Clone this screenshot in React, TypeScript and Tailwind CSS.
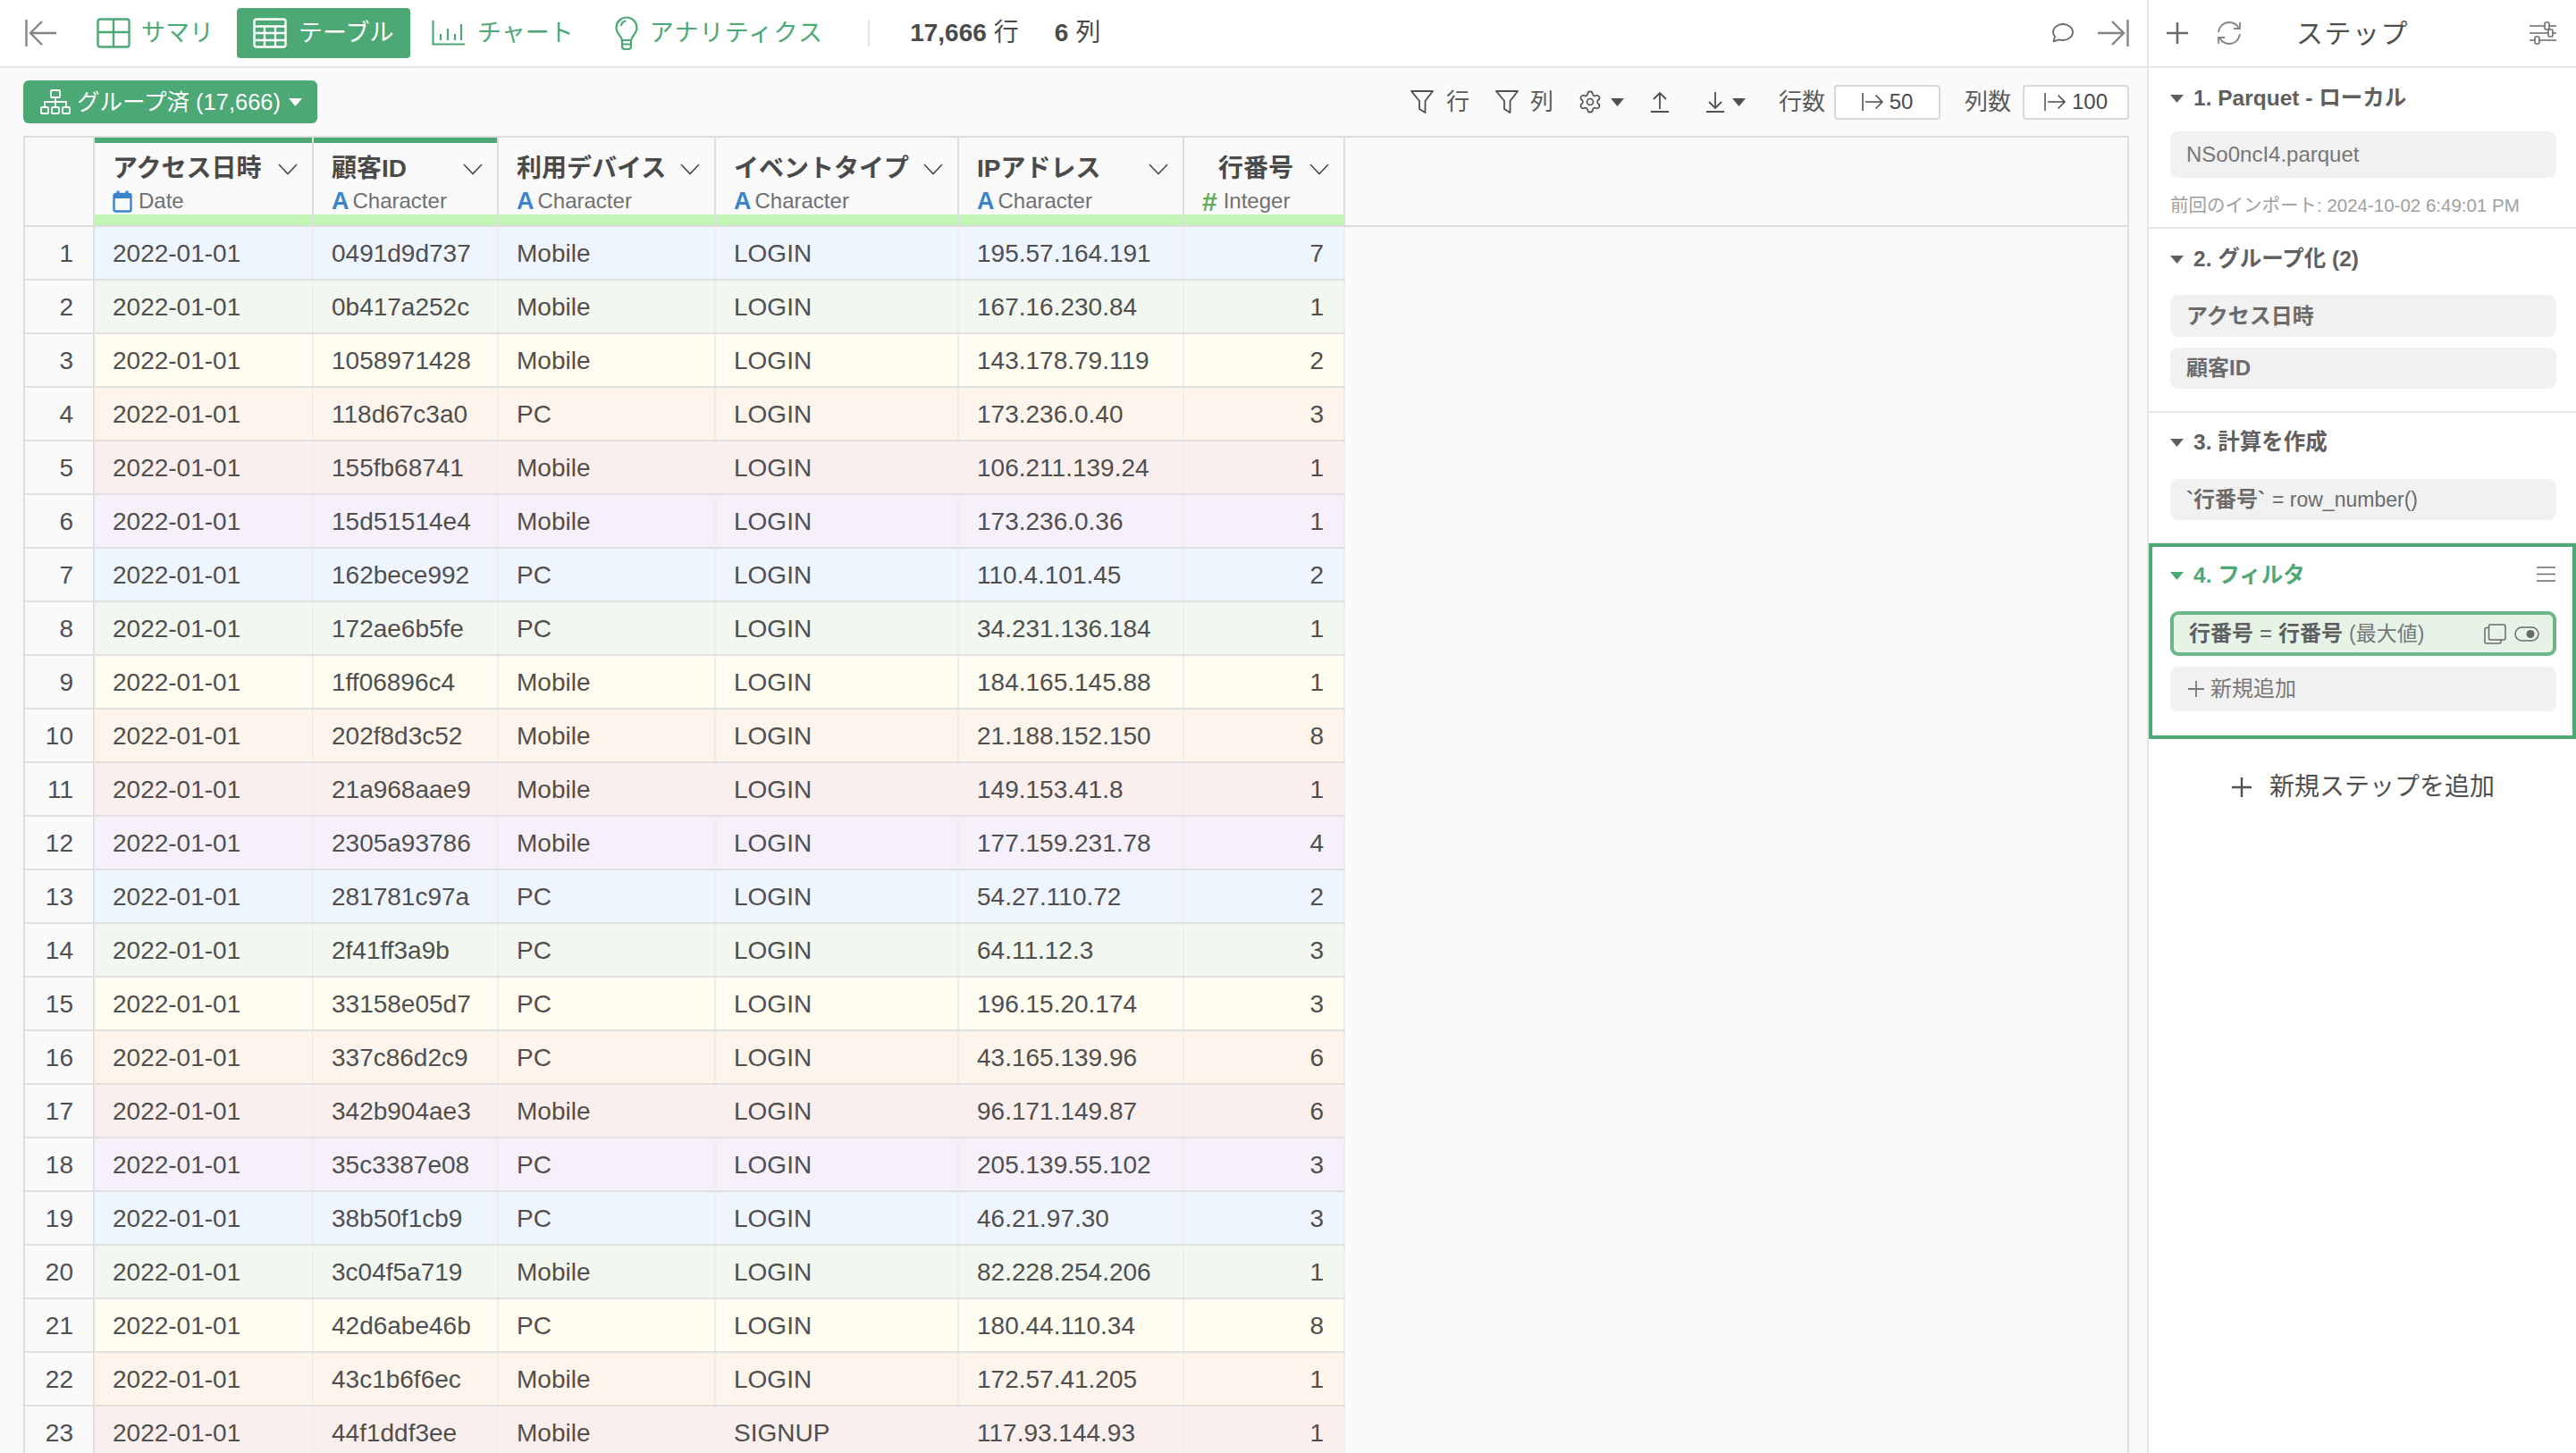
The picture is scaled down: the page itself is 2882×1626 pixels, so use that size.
import React from "react";
import { Settings } from "lucide-react";

const font = { fontFamily: '"Liberation Sans", "Noto Sans CJK JP", sans-serif' };

const rows: [string, string, string, string, number][] = [
  ["0491d9d737", "Mobile", "LOGIN", "195.57.164.191", 7],
  ["0b417a252c", "Mobile", "LOGIN", "167.16.230.84", 1],
  ["1058971428", "Mobile", "LOGIN", "143.178.79.119", 2],
  ["118d67c3a0", "PC", "LOGIN", "173.236.0.40", 3],
  ["155fb68741", "Mobile", "LOGIN", "106.211.139.24", 1],
  ["15d51514e4", "Mobile", "LOGIN", "173.236.0.36", 1],
  ["162bece992", "PC", "LOGIN", "110.4.101.45", 2],
  ["172ae6b5fe", "PC", "LOGIN", "34.231.136.184", 1],
  ["1ff06896c4", "Mobile", "LOGIN", "184.165.145.88", 1],
  ["202f8d3c52", "Mobile", "LOGIN", "21.188.152.150", 8],
  ["21a968aae9", "Mobile", "LOGIN", "149.153.41.8", 1],
  ["2305a93786", "Mobile", "LOGIN", "177.159.231.78", 4],
  ["281781c97a", "PC", "LOGIN", "54.27.110.72", 2],
  ["2f41ff3a9b", "PC", "LOGIN", "64.11.12.3", 3],
  ["33158e05d7", "PC", "LOGIN", "196.15.20.174", 3],
  ["337c86d2c9", "PC", "LOGIN", "43.165.139.96", 6],
  ["342b904ae3", "Mobile", "LOGIN", "96.171.149.87", 6],
  ["35c3387e08", "PC", "LOGIN", "205.139.55.102", 3],
  ["38b50f1cb9", "PC", "LOGIN", "46.21.97.30", 3],
  ["3c04f5a719", "Mobile", "LOGIN", "82.228.254.206", 1],
  ["42d6abe46b", "PC", "LOGIN", "180.44.110.34", 8],
  ["43c1b6f6ec", "Mobile", "LOGIN", "172.57.41.205", 1],
  ["44f1ddf3ee", "Mobile", "SIGNUP", "117.93.144.93", 1],
];

const rowBg = ["bg-[#eff5fe]", "bg-[#f2f7ef]", "bg-[#fffcf0]", "bg-[#fdf4ec]", "bg-[#fbefee]", "bg-[#f5f0fa]"];

const Caret = ({ className = "" }: { className?: string }) => (
  <svg width="15" height="9" viewBox="0 0 15 9" className={className} fill="currentColor">
    <path d="M0 0h15L7.5 9z" />
  </svg>
);

const Chevron = () => (
  <svg width="22" height="13" viewBox="0 0 22 13" fill="none" stroke="#4a4a4a" strokeWidth="1.6">
    <path d="M1 1l10 10.5L21 1" />
  </svg>
);

const FilterIcon = () => (
  <svg width="26" height="26" viewBox="0 0 26 26" fill="none" stroke="#4f4f4f" strokeWidth="1.8" strokeLinejoin="round">
    <path d="M1 1h24L16.5 12v13L10 21V12z" />
  </svg>
);

const LimitIcon = () => (
  <svg width="25" height="20" viewBox="0 0 25 20" fill="none" stroke="#4a4a4a" strokeWidth="1.5" className="shrink-0 mr-[6px]">
    <path d="M1 0v20" />
    <path d="M4 10h19M15.500 2.500L23 10l-7.500 7.500" />
  </svg>
);

function TypeLabel({ kind }: { kind: "date" | "char" | "int" }) {
  if (kind === "date")
    return (
      <div className="flex items-center h-[30px]">
        <svg width="22" height="25" viewBox="0 0 22 25" fill="none" className="mr-[7px]">
          <rect x="1.5" y="4" width="19" height="19.5" rx="2" stroke="#3a84cf" strokeWidth="2.4" />
          <rect x="1.5" y="4" width="19" height="5" fill="#3a84cf" />
          <rect x="4.5" y="0.5" width="3" height="5" fill="#3a84cf" />
          <rect x="14.5" y="0.5" width="3" height="5" fill="#3a84cf" />
        </svg>
        <span className="text-[24px] text-[#707070]">Date</span>
      </div>
    );
  if (kind === "int")
    return (
      <div className="flex items-center h-[30px]">
        <span className="text-[30px] font-bold text-[#62ab5b] mr-[7px]">#</span>
        <span className="text-[24px] text-[#707070]">Integer</span>
      </div>
    );
  return (
    <div className="flex items-center h-[30px]">
      <span className="text-[27px] font-bold text-[#3a84cf] mr-[4px]">A</span>
      <span className="text-[24px] text-[#707070]">Character</span>
    </div>
  );
}

function HeadCell({
  w,
  title,
  kind,
  mark,
  right,
}: {
  w: string;
  title: string;
  kind: "date" | "char" | "int";
  mark?: boolean;
  right?: boolean;
}) {
  return (
    <div className={`${w} h-[98px] flex flex-col border-r-2 border-[#dddddd] shrink-0`}>
      <div className={`h-[6px] ${mark ? "bg-[#4ca874]" : ""}`} />
      <div className={`flex items-center h-[56px] pt-[2px] pl-[20px] pr-[16px] ${right ? "justify-end gap-[18px]" : "justify-between"}`}>
        <span className="text-[28px] font-bold text-[#4a4a4a] whitespace-nowrap">{title}</span>
        <Chevron />
      </div>
      <div className="pl-[20px] h-[24px] flex items-center -mt-[3px]">
        <TypeLabel kind={kind} />
      </div>
      <div className="mt-auto h-[12px] bg-[#c3f5b6]" />
    </div>
  );
}

function Cell({ w, children, right }: { w: string; children: React.ReactNode; right?: boolean }) {
  return (
    <div
      className={`${w} h-full flex items-center shrink-0 pt-[1px] border-r-2 border-[#eeeeee] text-[28px] text-[#4f4f4f] ${
        right ? "justify-end pr-[22px]" : "pl-[20px]"
      }`}
    >
      {children}
    </div>
  );
}

function Tab({
  icon,
  label,
  active,
  className = "",
}: {
  icon: React.ReactNode;
  label: string;
  active?: boolean;
  className?: string;
}) {
  return (
    <div
      className={`flex items-center h-[56px] rounded-[4px] text-[27px] whitespace-nowrap ${
        active ? "bg-[#4ca874] text-white" : "text-[#4ca874]"
      } ${className}`}
    >
      {icon}
      <span>{label}</span>
    </div>
  );
}

function SectionTitle({ children, green }: { children: React.ReactNode; green?: boolean }) {
  return (
    <div className={`flex items-center h-[34px] text-[24.5px] font-bold ${green ? "text-[#4ca874]" : "text-[#5f5f5f]"}`}>
      <Caret className="mr-[11px] shrink-0" />
      <span className="whitespace-nowrap">{children}</span>
    </div>
  );
}

function StepBox({ children, className = "" }: { children: React.ReactNode; className?: string }) {
  return (
    <div className={`w-[432px] flex items-center pl-[18px] bg-[#f1f1f1] rounded-[9px] text-[24px] text-[#6b6b6b] whitespace-nowrap ${className}`}>
      {children}
    </div>
  );
}

export default function App() {
  return (
    <div className="w-[2882px] h-[1626px] overflow-hidden flex bg-white" style={font}>
      {/* Main pane */}
      <div className="w-[2402px] shrink-0 flex flex-col bg-[#fafafa]">
        {/* Top bar */}
        <div className="h-[76px] shrink-0 bg-white border-b-2 border-[#e5e5e5] flex items-center pl-[28px] pr-[20px]">
          <svg width="36" height="32" viewBox="0 0 36 32" fill="none" stroke="#858585" strokeWidth="2.4" className="shrink-0">
            <path d="M1.5 1v30" />
            <path d="M35 16H6M19 3L6 16l13 13" />
          </svg>
          <Tab
            className="ml-[44px]"
            label="サマリ"
            icon={
              <svg width="38" height="34" viewBox="0 0 38 34" fill="none" stroke="#4ca874" strokeWidth="2.4" className="mr-[12px]">
                <rect x="1.5" y="1.5" width="35" height="31" rx="2.5" />
                <path d="M19 1.500v31M1.500 16h35" />
              </svg>
            }
          />
          <Tab
            active
            className="ml-[26px] w-[194px] pl-[18px]"
            label="テーブル"
            icon={
              <svg width="38" height="34" viewBox="0 0 38 34" fill="none" stroke="#ffffff" strokeWidth="2.4" className="mr-[13px]">
                <rect x="1.5" y="1.5" width="35" height="31" rx="2.5" />
                <path d="M1.500 9.500h35M1.500 17h35M1.500 25h35M13 9.500v23M25 9.500v23" />
              </svg>
            }
          />
          <Tab
            className="ml-[24px]"
            label="チャート"
            icon={
              <svg width="38" height="28" viewBox="0 0 38 28" fill="none" stroke="#4ca874" strokeWidth="2.2" className="mr-[13px]">
                <path d="M1.500 0v26.500H37" />
                <path d="M10 15v7M18 9v13M26 15v7M33 4v18" />
              </svg>
            }
          />
          <Tab
            className="ml-[46px] tracking-[1.2px]"
            label="アナリティクス"
            icon={
              <svg width="26" height="38" viewBox="0 0 26 38" fill="none" stroke="#4ca874" strokeWidth="2.2" className="mr-[13px]">
                <path d="M8 27c0-4-6.500-7-6.500-14a11.500 11.500 0 0 1 23 0c0 7-6.500 10-6.500 14z" />
                <path d="M7 11c0-3 2.500-5.500 5.500-5.500" />
                <path d="M8 27v7c0 1.500 1 3 3 3h4c2 0 3-1.500 3-3v-7M8 31.500h10" />
              </svg>
            }
          />
          <div className="ml-[50px] w-[2px] h-[30px] bg-[#e5e5e5]" />
          <div className="ml-[45px] text-[28px] text-[#4a4a4a] whitespace-nowrap">
            <span className="font-bold">17,666</span>
            <span className="ml-[8px]">行</span>
            <span className="font-bold ml-[40px]">6</span>
            <span className="ml-[8px]">列</span>
          </div>
          <div className="ml-auto flex items-center">
            <svg width="24" height="22" viewBox="0 0 24 22" fill="none" stroke="#6a6a6a" strokeWidth="1.8" strokeLinejoin="round" className="shrink-0">
              <path d="M1.500 20.500l1.500-5.500C1.500 13.500 1 11.800 1 10 1 5 6 1 12 1s11 4 11 9-5 9-11 9c-1.500 0-3-.2-4.500-.7z" />
            </svg>
            <svg width="36" height="32" viewBox="0 0 36 32" fill="none" stroke="#858585" strokeWidth="2.4" className="ml-[26px] shrink-0">
              <path d="M34.500 1v30" />
              <path d="M1 16h29M17 3l13 13-13 13" />
            </svg>
          </div>
        </div>

        {/* Toolbar */}
        <div className="h-[76px] shrink-0 flex items-center pl-[26px] pr-[20px]">
          <div className="h-[48px] w-[329px] rounded-[6px] bg-[#4ca874] text-white flex items-center pl-[19px] text-[25.5px] whitespace-nowrap">
            <svg width="34" height="28" viewBox="0 0 34 28" fill="none" stroke="#ffffff" strokeWidth="1.8" className="mr-[7px] shrink-0">
              <rect x="12" y="1" width="10" height="8" rx="1" />
              <path d="M17 9v5M5 20v-6h24v6M17 14v6" />
              <rect x="1" y="20" width="8" height="7" rx="1" />
              <rect x="13" y="20" width="8" height="7" rx="1" />
              <rect x="25" y="20" width="8" height="7" rx="1" />
            </svg>
            <span>グループ済 (17,666)</span>
            <Caret className="ml-[9px]" />
          </div>
          <div className="ml-auto flex items-center text-[26px] text-[#5a5a5a] whitespace-nowrap">
            <FilterIcon />
            <span className="ml-[14px]">行</span>
            <span className="ml-[29px]">
              <FilterIcon />
            </span>
            <span className="ml-[13px]">列</span>
            <Settings size={28} strokeWidth={1.4} color="#4f4f4f" className="ml-[27px] shrink-0" />
            <Caret className="ml-[9px] text-[#4f4f4f]" />
            <svg width="20" height="24" viewBox="0 0 20 24" fill="none" stroke="#4f4f4f" strokeWidth="1.8" className="ml-[30px]">
              <path d="M10 20V2M3 9l7-7 7 7M0 23h20" />
            </svg>
            <svg width="20" height="24" viewBox="0 0 20 24" fill="none" stroke="#4f4f4f" strokeWidth="1.8" className="ml-[42px]">
              <path d="M10 1v18M3 12l7 7 7-7M0 23h20" />
            </svg>
            <Caret className="ml-[9px] text-[#4f4f4f]" />
            <span className="ml-[37px]">行数</span>
            <div className="ml-[10px] w-[119px] h-[39px] rounded-[4px] border-2 border-[#d8d8d8] bg-white flex items-center justify-center text-[24px] text-[#4a4a4a]">
              <LimitIcon />
              <span>50</span>
            </div>
            <span className="ml-[27px]">列数</span>
            <div className="ml-[13px] w-[119px] h-[39px] rounded-[4px] border-2 border-[#d8d8d8] bg-white flex items-center justify-center text-[24px] text-[#4a4a4a]">
              <LimitIcon />
              <span>100</span>
            </div>
          </div>
        </div>

        {/* Table */}
        <div className="ml-[26px] mr-[20px] flex-1 min-h-0 overflow-hidden border-2 border-b-0 border-[#dddddd] bg-[#fafafa]">
          <div className="flex h-[100px] border-b-2 border-[#dddddd]">
            <div className="w-[78px] shrink-0 h-full border-r-2 border-[#dddddd]" />
            <HeadCell w="w-[245px]" title="アクセス日時" kind="date" mark />
            <HeadCell w="w-[207px]" title="顧客ID" kind="char" mark />
            <HeadCell w="w-[243px]" title="利用デバイス" kind="char" />
            <HeadCell w="w-[272px]" title="イベントタイプ" kind="char" />
            <HeadCell w="w-[252px]" title="IPアドレス" kind="char" />
            <HeadCell w="w-[180px]" title="行番号" kind="int" right />
          </div>
          {rows.map((r, i) => (
            <div key={i} className="flex h-[60px] w-[1477px]">
              <div className="w-[78px] shrink-0 h-full pt-[1px] border-b-2 border-r-2 border-[#e0e0e0] flex items-center justify-end pr-[22px] text-[28px] text-[#4f4f4f]">
                {i + 1}
              </div>
              <div className={`flex flex-1 h-full border-b-2 border-[#e0e0e0] ${rowBg[i % 6]}`}>
                <Cell w="w-[245px]">2022-01-01</Cell>
                <Cell w="w-[207px]">{r[0]}</Cell>
                <Cell w="w-[243px]">{r[1]}</Cell>
                <Cell w="w-[272px]">{r[2]}</Cell>
                <Cell w="w-[252px]">{r[3]}</Cell>
                <Cell w="w-[180px]" right>
                  {r[4]}
                </Cell>
              </div>
            </div>
          ))}
        </div>
      </div>

      {/* Steps pane */}
      <div className="w-[480px] shrink-0 flex flex-col border-l-2 border-[#e5e5e5] bg-white">
        <div className="h-[76px] shrink-0 border-b-2 border-[#e5e5e5] flex items-center pl-[20px] pr-[22px]">
          <svg width="24" height="24" viewBox="0 0 24 24" fill="none" stroke="#6a6a6a" strokeWidth="2.6" className="shrink-0">
            <path d="M12 0v24M0 12h24" />
          </svg>
          <svg width="28" height="28" viewBox="0 0 28 28" fill="none" stroke="#858585" strokeWidth="1.8" className="ml-[32px] shrink-0">
            <path d="M2 13C3 6 8 2 14 2c5 0 9 3 11 7M26 2v7h-7" />
            <path d="M26 15c-1 7-6 11-12 11-5 0-9-3-11-7M2 26v-7h7" />
          </svg>
          <span className="ml-[61px] text-[30px] tracking-[1.5px] text-[#4f4f4f] whitespace-nowrap">ステップ</span>
          <svg width="30" height="26" viewBox="0 0 30 26" fill="none" stroke="#6a6a6a" strokeWidth="1.6" className="ml-auto shrink-0">
            <path d="M0 5h30M0 13h30M0 21h30" />
            <rect x="17" y="1" width="5" height="8" rx="1.500" fill="#ffffff" />
            <rect x="21" y="9" width="5" height="8" rx="1.500" fill="#ffffff" />
            <rect x="6" y="17" width="5" height="8" rx="1.500" fill="#ffffff" />
          </svg>
        </div>

        <div className="h-[180px] shrink-0 border-b-2 border-[#e5e5e5] pl-[24px] pt-[17px]">
          <SectionTitle>1. Parquet - ローカル</SectionTitle>
          <StepBox className="h-[52px] mt-[20px] text-[#777777]">NSo0ncI4.parquet</StepBox>
          <div className="mt-[16px] text-[20.5px] text-[#a0a0a0] whitespace-nowrap">前回のインポート: 2024-10-02 6:49:01 PM</div>
        </div>

        <div className="h-[206px] shrink-0 border-b-2 border-[#e5e5e5] pl-[24px] pt-[17px]">
          <SectionTitle>2. グループ化 (2)</SectionTitle>
          <StepBox className="h-[47px] mt-[23px] font-bold">アクセス日時</StepBox>
          <StepBox className="h-[46px] mt-[12px] font-bold">顧客ID</StepBox>
        </div>

        <div className="h-[146px] shrink-0 border-b border-[#e5e5e5] pl-[24px] pt-[16px]">
          <SectionTitle>3. 計算を作成</SectionTitle>
          <StepBox className="h-[46px] mt-[24px]">
            <span className="font-bold">`行番号`</span>
            <span className="ml-[8px] text-[23px]">= row_number()</span>
          </StepBox>
        </div>

        <div className="h-[219px] shrink-0 border-4 border-[#4ca874] pl-[20px] pt-[15px]">
          <div className="flex items-center justify-between pr-[19px]">
            <SectionTitle green>4. フィルタ</SectionTitle>
            <svg width="21" height="17" viewBox="0 0 21 17" fill="none" stroke="#6a6a6a" strokeWidth="1.5" className="shrink-0 -mt-[4px]">
              <path d="M0 1h21M0 8.500h21M0 16h21" />
            </svg>
          </div>
          <div className="w-[432px] h-[50px] mt-[23px] rounded-[9px] border-4 border-[#6bb78a] bg-[#e6f3e6] flex items-center pl-[17px] pr-[15px] text-[24px] text-[#5f5f5f] whitespace-nowrap">
            <span className="font-bold">行番号</span>
            <span className="ml-[7px]">=</span>
            <span className="font-bold ml-[7px]">行番号</span>
            <span className="ml-[7px] text-[23px] text-[#777777]">(最大値)</span>
            <svg width="25" height="23" viewBox="0 0 25 23" fill="none" stroke="#6a6a6a" strokeWidth="1.5" className="ml-auto shrink-0">
              <rect x="5.500" y="1" width="18.500" height="17" rx="2" />
              <path d="M5.500 4.500H3A2 2 0 0 0 1 6.500V20a2 2 0 0 0 2 2h14a2 2 0 0 0 2-2v-2" />
            </svg>
            <svg width="28" height="17" viewBox="0 0 28 17" fill="none" stroke="#6a6a6a" strokeWidth="1.5" className="ml-[9px] shrink-0">
              <rect x="1" y="1" width="26" height="15" rx="7.500" />
              <circle cx="18" cy="8.500" r="4.500" fill="#6a6a6a" stroke="none" />
            </svg>
          </div>
          <StepBox className="h-[50px] mt-[12px] pl-[20px] text-[#7a7a7a]">
            <svg width="18" height="18" viewBox="0 0 18 18" fill="none" stroke="#7a7a7a" strokeWidth="1.800" className="mr-[7px] shrink-0">
              <path d="M9 0v18M0 9h18" />
            </svg>
            新規追加
          </StepBox>
        </div>

        <div className="flex items-center pl-[93px] mt-[36px] h-[36px] text-[28px] text-[#4f4f4f] whitespace-nowrap">
          <svg width="22" height="22" viewBox="0 0 22 22" fill="none" stroke="#4f4f4f" strokeWidth="2.400" className="mr-[20px] shrink-0">
            <path d="M11 0v22M0 11h22" />
          </svg>
          新規ステップを追加
        </div>
      </div>
    </div>
  );
}
